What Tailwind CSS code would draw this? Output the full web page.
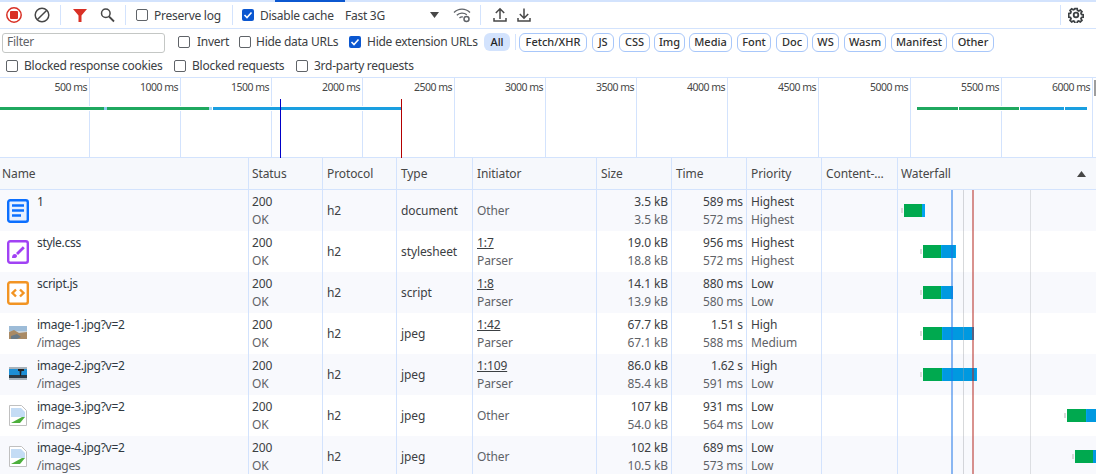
<!DOCTYPE html>
<html>
<head>
<meta charset="utf-8">
<script src="https://cdn.jsdelivr.net/npm/@tailwindcss/browser@4"></script>
</head>
<body class="bg-white">
<div class="relative w-[1096px] h-[474px] overflow-hidden bg-white text-[12px] leading-[18px] text-[#3c4043] font-['Noto_Sans',sans-serif] tracking-[-0.26px]">

  <!-- toolbar -->
  <div class="relative h-[29px] border-t-2 border-b border-[#d3e3fd] flex items-center">
    <div class="absolute left-[275px] top-[-2px] w-[70px] h-[2px] bg-[#0b57d0]"></div>
    <svg class="ml-[5px] w-[18px] h-[18px]" viewBox="0 0 18 18"><circle cx="9" cy="9" r="7.2" fill="none" stroke="#d93025" stroke-width="1.5"/><rect x="5" y="5" width="8" height="8" rx="1" fill="#d93025"/></svg>
    <svg class="ml-[10px] w-[18px] h-[18px]" viewBox="0 0 18 18"><circle cx="9" cy="9" r="6.8" fill="none" stroke="#474747" stroke-width="1.5"/><path d="M4.2 13.8 13.8 4.2" stroke="#474747" stroke-width="1.5"/></svg>
    <div class="ml-[9px] w-px h-[20px] bg-[#d3e3fd]"></div>
    <svg class="ml-[11px] w-[16px] h-[16px]" viewBox="0 0 16 16"><path d="M1 2h14L9.5 8.5V15h-3V8.5z" fill="#d93025"/></svg>
    <svg class="ml-[11px] w-[17px] h-[17px]" viewBox="0 0 17 17"><circle cx="6.8" cy="6.3" r="4.3" fill="none" stroke="#474747" stroke-width="1.5"/><path d="m10 9.5 5 5" stroke="#474747" stroke-width="1.8"/></svg>
    <div class="ml-[9px] w-px h-[20px] bg-[#d3e3fd]"></div>
    <span class="ml-[10px] w-[12px] h-[12px] rounded-[2px] border border-[#5f6368] bg-white"></span>
    <span class="ml-[6px] w-[72px] pt-px whitespace-nowrap">Preserve log</span>
    <div class="ml-[6px] w-px h-[20px] bg-[#d3e3fd]"></div>
    <span class="ml-[9px] w-[12px] h-[12px] rounded-[2px] bg-[#0b57d0] flex items-center justify-center"><svg class="w-[10px] h-[10px]" viewBox="0 0 10 10"><path d="M1.5 5 4 7.5 8.5 2.5" fill="none" stroke="#fff" stroke-width="1.6"/></svg></span>
    <span class="ml-[6px] w-[85px] pt-px whitespace-nowrap">Disable cache</span>
    <span class="w-[85px] pt-px whitespace-nowrap">Fast 3G</span>
    <svg class="w-[10px] h-[6px]" viewBox="0 0 10 6"><path d="M0 0h9L4.500 6z" fill="#474747"/></svg>
    <svg class="ml-[13px] w-[18px] h-[16px]" viewBox="0 0 18 16"><path d="M1 5.500C5.500 1 12.500 1 17 5.500M3.800 8.300C6.500 5.600 11 5.500 13.800 7.800M6.500 11c1-1 2.500-1.300 3.500-1" fill="none" stroke="#5f6368" stroke-width="1.300"/><circle cx="13.500" cy="12" r="2.500" fill="none" stroke="#5f6368" stroke-width="1.500"/></svg>
    <div class="ml-[9px] w-px h-[20px] bg-[#d3e3fd]"></div>
    <svg class="ml-[11px] w-[16px] h-[16px]" viewBox="0 0 16 16"><path d="M8 12V2M3.800 6 8 1.800 12.200 6M2 11v3h12v-3" fill="none" stroke="#474747" stroke-width="1.500"/></svg>
    <svg class="ml-[8px] w-[16px] h-[16px]" viewBox="0 0 16 16"><path d="M8 1.500V11M3.800 7 8 11.200 12.200 7M2 11v3h12v-3" fill="none" stroke="#474747" stroke-width="1.500"/></svg>
    <div class="ml-[528px] w-px h-[20px] bg-[#d3e3fd]"></div>
    <svg class="ml-[7px] w-[16px] h-[16px]" viewBox="0 0 16 16"><path d="M6.700 1h2.600l.4 2 1.400.6 1.700-1.100 1.800 1.800-1.100 1.700.6 1.400 2 .4v2.600l-2 .4-.6 1.400 1.100 1.700-1.800 1.800-1.700-1.100-1.400.6-.4 2H6.700l-.4-2-1.400-.6-1.700 1.100-1.800-1.800 1.100-1.700-.6-1.400-2-.4V6.400l2-.4.6-1.400-1.100-1.700 1.800-1.800 1.700 1.100 1.400-.6z" transform="translate(.8 .8) scale(.9)" fill="none" stroke="#3c4043" stroke-width="1.900"/><circle cx="8" cy="8" r="2.300" fill="none" stroke="#3c4043" stroke-width="1.800"/></svg>
  </div>

  <!-- filter row -->
  <div class="h-[24px] pt-[2px] flex items-center">
    <div class="ml-[2px] mt-px w-[163px] h-[20px] rounded-[3px] border border-[#c4c7c5] bg-white pl-[4px] text-[#5f6368] leading-[16px]">Filter</div>
    <span class="ml-[13px] w-[12px] h-[12px] rounded-[2px] border border-[#5f6368]"></span>
    <span class="ml-[7px] w-[42px] whitespace-nowrap">Invert</span>
    <span class="w-[12px] h-[12px] rounded-[2px] border border-[#5f6368]"></span>
    <span class="ml-[5px] w-[93px] whitespace-nowrap">Hide data URLs</span>
    <span class="w-[12px] h-[12px] rounded-[2px] bg-[#0b57d0] flex items-center justify-center"><svg class="w-[10px] h-[10px]" viewBox="0 0 10 10"><path d="M1.5 5 4 7.5 8.5 2.500" fill="none" stroke="#fff" stroke-width="1.600"/></svg></span>
    <span class="ml-[6px] w-[117px] whitespace-nowrap">Hide extension URLs</span>
    <span class="w-[26px] h-[18px] rounded-[6px] bg-[#d3e3fd] text-[11px] font-medium leading-[18px] text-center text-[#1f1f1f] tracking-normal">All</span>
    <div class="ml-[5px] w-px h-[16px] bg-[#d3e3fd]"></div>
    <div class="ml-[3px] flex text-[11px] font-medium leading-[16px] text-[#303030] tracking-normal">
      <span class="w-[68px] h-[19px] rounded-[6px] border border-[#a8c7fa] text-center">Fetch/XHR</span>
      <span class="ml-[5px] w-[22px] h-[19px] rounded-[6px] border border-[#a8c7fa] text-center">JS</span>
      <span class="ml-[5px] w-[31px] h-[19px] rounded-[6px] border border-[#a8c7fa] text-center">CSS</span>
      <span class="ml-[4px] w-[31px] h-[19px] rounded-[6px] border border-[#a8c7fa] text-center">Img</span>
      <span class="ml-[4px] w-[43px] h-[19px] rounded-[6px] border border-[#a8c7fa] text-center">Media</span>
      <span class="ml-[5px] w-[34px] h-[19px] rounded-[6px] border border-[#a8c7fa] text-center">Font</span>
      <span class="ml-[5px] w-[32px] h-[19px] rounded-[6px] border border-[#a8c7fa] text-center">Doc</span>
      <span class="ml-[4px] w-[27px] h-[19px] rounded-[6px] border border-[#a8c7fa] text-center">WS</span>
      <span class="ml-[5px] w-[42px] h-[19px] rounded-[6px] border border-[#a8c7fa] text-center">Wasm</span>
      <span class="ml-[5px] w-[56px] h-[19px] rounded-[6px] border border-[#a8c7fa] text-center">Manifest</span>
      <span class="ml-[5px] w-[42px] h-[19px] rounded-[6px] border border-[#a8c7fa] text-center">Other</span>
    </div>
  </div>

  <!-- third row -->
  <div class="h-[25px] pt-[2px] flex items-center border-b border-[#d3e3fd]">
    <span class="ml-[6px] w-[12px] h-[12px] rounded-[2px] border border-[#5f6368]"></span>
    <span class="ml-[6px] w-[150px] whitespace-nowrap">Blocked response cookies</span>
    <span class="w-[12px] h-[12px] rounded-[2px] border border-[#5f6368]"></span>
    <span class="ml-[6px] w-[104px] whitespace-nowrap">Blocked requests</span>
    <span class="w-[12px] h-[12px] rounded-[2px] border border-[#5f6368]"></span>
    <span class="ml-[6px] whitespace-nowrap">3rd-party requests</span>
  </div>

  <!-- overview -->
  <div class="relative h-[80px] border-b border-[#d3e3fd] text-[10.500px] leading-[16px] text-[#474747] tracking-[-0.5px]">
    <div class="flex h-full">
      <div class="w-[90px] shrink-0 border-r border-[#d3e3fd] text-right pr-[2px] pt-[1px]">500 ms</div>
      <div class="w-[91px] shrink-0 border-r border-[#d3e3fd] text-right pr-[2px] pt-[1px]">1000 ms</div>
      <div class="w-[91px] shrink-0 border-r border-[#d3e3fd] text-right pr-[2px] pt-[1px]">1500 ms</div>
      <div class="w-[91px] shrink-0 border-r border-[#d3e3fd] text-right pr-[2px] pt-[1px]">2000 ms</div>
      <div class="w-[92px] shrink-0 border-r border-[#d3e3fd] text-right pr-[2px] pt-[1px]">2500 ms</div>
      <div class="w-[91px] shrink-0 border-r border-[#d3e3fd] text-right pr-[2px] pt-[1px]">3000 ms</div>
      <div class="w-[91px] shrink-0 border-r border-[#d3e3fd] text-right pr-[2px] pt-[1px]">3500 ms</div>
      <div class="w-[91px] shrink-0 border-r border-[#d3e3fd] text-right pr-[2px] pt-[1px]">4000 ms</div>
      <div class="w-[91px] shrink-0 border-r border-[#d3e3fd] text-right pr-[2px] pt-[1px]">4500 ms</div>
      <div class="w-[92px] shrink-0 border-r border-[#d3e3fd] text-right pr-[2px] pt-[1px]">5000 ms</div>
      <div class="w-[91px] shrink-0 border-r border-[#d3e3fd] text-right pr-[2px] pt-[1px]">5500 ms</div>
      <div class="w-[91px] shrink-0 border-r border-[#d3e3fd] text-right pr-[2px] pt-[1px]">6000 ms</div>
    </div>
    <!-- activity bars -->
    <div class="absolute left-0 top-[28px] w-[401px] h-[5px] bg-white"></div>
    <div class="absolute left-0 top-[29px] w-[104px] h-[3px] bg-[#1fa85f]"></div>
    <div class="absolute left-[104px] top-[29px] w-[3px] h-[3px] bg-[#8ccbf0]"></div>
    <div class="absolute left-[107px] top-[29px] w-[102px] h-[3px] bg-[#1fa85f]"></div>
    <div class="absolute left-[209px] top-[29px] w-[3px] h-[3px] bg-[#a8d8f5]"></div>
    <div class="absolute left-[213px] top-[29px] w-[188px] h-[3px] bg-[#1a9fe0]"></div>
    <div class="absolute left-[917px] top-[28px] w-[171px] h-[5px] bg-white"></div>
    <div class="absolute left-[917px] top-[29px] w-[41px] h-[3px] bg-[#1fa85f]"></div>
    <div class="absolute left-[959px] top-[29px] w-[60px] h-[3px] bg-[#1fa85f]"></div>
    <div class="absolute left-[1020px] top-[29px] w-[44px] h-[3px] bg-[#1a9fe0]"></div>
    <div class="absolute left-[1065px] top-[29px] w-[22px] h-[3px] bg-[#1a9fe0]"></div>
    <!-- markers -->
    <div class="absolute left-[280px] top-[21px] w-px h-[59px] bg-[#0000c8]"></div>
    <div class="absolute left-[401px] top-[21px] w-px h-[59px] bg-[#b30000]"></div>
    <div class="absolute left-[1094px] top-[2px] w-[2px] h-[16px] bg-[#9e9e9e]"></div>
  </div>

  <!-- header -->
  <div class="grid grid-cols-[248px_74px_74px_76px_124px_75px_75px_75px_76px_199px] h-[32px] bg-[#f6f8fc] border-b border-[#d3e3fd] leading-[31px] text-[#474747] tracking-[-0.1px]">
    <div class="pl-[2px]">Name</div>
    <div class="border-l border-[#d3e3fd] pl-[3px]">Status</div>
    <div class="border-l border-[#d3e3fd] pl-[4px]">Protocol</div>
    <div class="border-l border-[#d3e3fd] pl-[4px]">Type</div>
    <div class="border-l border-[#d3e3fd] pl-[4px]">Initiator</div>
    <div class="border-l border-[#d3e3fd] pl-[4px]">Size</div>
    <div class="border-l border-[#d3e3fd] pl-[4px]">Time</div>
    <div class="border-l border-[#d3e3fd] pl-[4px]">Priority</div>
    <div class="border-l border-[#d3e3fd] pl-[4px] whitespace-nowrap overflow-hidden">Content-…</div>
    <div class="border-l border-[#d3e3fd] pl-[3px] flex justify-between items-center pr-[10px]"><span>Waterfall</span><svg class="w-[9px] h-[6px]" viewBox="0 0 9 6"><path d="M4.500 0 9 6H0z" fill="#474747"/></svg></div>
  </div>

  <!-- rows -->
  <div class="tracking-[-0.1px]">
    <!-- row 1 -->
    <div class="grid grid-cols-[248px_74px_74px_76px_124px_75px_75px_75px_76px_199px] h-[41px] bg-[#f8f9fd]">
      <div class="flex items-center"><svg class="ml-[7px] w-[22px] h-[24px]" viewBox="0 0 22 24"><rect x="1.200" y="1.200" width="19.600" height="21.600" rx="2" fill="#e8f0fe" stroke="#0b6fff" stroke-width="2.400"/><path d="M5 6.500h12M5 11.500h12M5 16.500h9" stroke="#0b6fff" stroke-width="2.400"/></svg><div class="ml-[8px] self-start pt-[3px] text-[#303942]">1</div></div>
      <div class="border-l border-[#d3e3fd] pl-[3px] flex flex-col justify-center"><span>200</span><span class="text-[#5f6368]">OK</span></div>
      <div class="border-l border-[#d3e3fd] pl-[4px] flex items-center">h2</div>
      <div class="border-l border-[#d3e3fd] pl-[4px] flex items-center">document</div>
      <div class="border-l border-[#d3e3fd] pl-[4px] flex items-center text-[#5f6368]">Other</div>
      <div class="border-l border-[#d3e3fd] pr-[3px] flex flex-col justify-center text-right"><span>3.5 kB</span><span class="text-[#5f6368]">3.5 kB</span></div>
      <div class="border-l border-[#d3e3fd] pr-[3px] flex flex-col justify-center text-right"><span>589 ms</span><span class="text-[#5f6368]">572 ms</span></div>
      <div class="border-l border-[#d3e3fd] pl-[4px] flex flex-col justify-center"><span>Highest</span><span class="text-[#5f6368]">Highest</span></div>
      <div class="border-l border-[#d3e3fd]"></div>
      <div class="border-l border-[#d3e3fd] flex items-center overflow-hidden"><span class="ml-[3px] w-[2px] h-[5px] bg-[#d9d9d9]"></span><span class="ml-px w-[18px] h-[13px] bg-[#00a94f]"></span><span class="w-[3px] h-[13px] bg-[#00a4f0]"></span></div>
    </div>
    <!-- row 2 -->
    <div class="grid grid-cols-[248px_74px_74px_76px_124px_75px_75px_75px_76px_199px] h-[41px]">
      <div class="flex items-center"><svg class="ml-[7px] w-[22px] h-[24px]" viewBox="0 0 22 24"><rect x="1.200" y="1.200" width="19.600" height="21.600" rx="2" fill="#fff" stroke="#a142f4" stroke-width="2.400"/><path d="M9 13 15.800 6.300l2 2L11 15z" fill="#a142f4"/><path d="M5 18c0-2.500 1-4 2.800-4 1.300 0 2.200.9 2.200 2 0 1.500-1.300 2-2.600 2z" fill="#a142f4"/></svg><div class="ml-[8px] self-start pt-[3px] text-[#303942] tracking-[-0.3px]">style.css</div></div>
      <div class="border-l border-[#d3e3fd] pl-[3px] flex flex-col justify-center"><span>200</span><span class="text-[#5f6368]">OK</span></div>
      <div class="border-l border-[#d3e3fd] pl-[4px] flex items-center">h2</div>
      <div class="border-l border-[#d3e3fd] pl-[4px] flex items-center">stylesheet</div>
      <div class="border-l border-[#d3e3fd] pl-[4px] flex flex-col justify-center"><span class="underline">1:7</span><span class="text-[#5f6368]">Parser</span></div>
      <div class="border-l border-[#d3e3fd] pr-[3px] flex flex-col justify-center text-right"><span>19.0 kB</span><span class="text-[#5f6368]">18.8 kB</span></div>
      <div class="border-l border-[#d3e3fd] pr-[3px] flex flex-col justify-center text-right"><span>956 ms</span><span class="text-[#5f6368]">572 ms</span></div>
      <div class="border-l border-[#d3e3fd] pl-[4px] flex flex-col justify-center"><span>Highest</span><span class="text-[#5f6368]">Highest</span></div>
      <div class="border-l border-[#d3e3fd]"></div>
      <div class="border-l border-[#d3e3fd] flex items-center overflow-hidden"><span class="ml-[22px] w-[2px] h-[5px] bg-[#d9d9d9]"></span><span class="ml-px w-[18px] h-[13px] bg-[#00a94f]"></span><span class="w-[15px] h-[13px] bg-[#0099e0] border-x border-[#00a4f0]"></span></div>
    </div>
    <!-- row 3 -->
    <div class="grid grid-cols-[248px_74px_74px_76px_124px_75px_75px_75px_76px_199px] h-[41px] bg-[#f8f9fd]">
      <div class="flex items-center"><svg class="ml-[7px] w-[22px] h-[24px]" viewBox="0 0 22 24"><rect x="1.200" y="1.200" width="19.600" height="21.600" rx="2" fill="#fff" stroke="#f29423" stroke-width="2.400"/><path d="M9 8.500 5.500 12 9 15.500M13 8.500l3.500 3.500-3.500 3.500" fill="none" stroke="#f29423" stroke-width="2.400"/></svg><div class="ml-[8px] self-start pt-[3px] text-[#303942] tracking-[-0.3px]">script.js</div></div>
      <div class="border-l border-[#d3e3fd] pl-[3px] flex flex-col justify-center"><span>200</span><span class="text-[#5f6368]">OK</span></div>
      <div class="border-l border-[#d3e3fd] pl-[4px] flex items-center">h2</div>
      <div class="border-l border-[#d3e3fd] pl-[4px] flex items-center">script</div>
      <div class="border-l border-[#d3e3fd] pl-[4px] flex flex-col justify-center"><span class="underline">1:8</span><span class="text-[#5f6368]">Parser</span></div>
      <div class="border-l border-[#d3e3fd] pr-[3px] flex flex-col justify-center text-right"><span>14.1 kB</span><span class="text-[#5f6368]">13.9 kB</span></div>
      <div class="border-l border-[#d3e3fd] pr-[3px] flex flex-col justify-center text-right"><span>880 ms</span><span class="text-[#5f6368]">580 ms</span></div>
      <div class="border-l border-[#d3e3fd] pl-[4px] flex flex-col justify-center"><span>Low</span><span class="text-[#5f6368]">Low</span></div>
      <div class="border-l border-[#d3e3fd]"></div>
      <div class="border-l border-[#d3e3fd] flex items-center overflow-hidden"><span class="ml-[22px] w-[2px] h-[5px] bg-[#d9d9d9]"></span><span class="ml-px w-[18px] h-[13px] bg-[#00a94f]"></span><span class="w-[12px] h-[13px] bg-[#0099e0] border-l border-[#00a4f0]"></span></div>
    </div>
    <!-- row 4 -->
    <div class="grid grid-cols-[248px_74px_74px_76px_124px_75px_75px_75px_76px_199px] h-[41px]">
      <div class="flex items-center"><svg class="ml-[9px] -mt-[2px] w-[18px] h-[13px]" viewBox="0 0 18 13"><rect width="18" height="13" fill="#c9d3da"/><rect width="18" height="5" fill="#9dbcd8"/><path d="M0 13V6l5-2 5 3 8-1v7z" fill="#a98a64"/><path d="M2 10l6-2 4 3-4 2H2z" fill="#6a7a86"/></svg><div class="ml-[10px] self-stretch flex flex-col justify-center text-[#303942] tracking-[-0.3px]"><span>image-1.jpg?v=2</span><span class="text-[#5f6368]">/images</span></div></div>
      <div class="border-l border-[#d3e3fd] pl-[3px] flex flex-col justify-center"><span>200</span><span class="text-[#5f6368]">OK</span></div>
      <div class="border-l border-[#d3e3fd] pl-[4px] flex items-center">h2</div>
      <div class="border-l border-[#d3e3fd] pl-[4px] flex items-center">jpeg</div>
      <div class="border-l border-[#d3e3fd] pl-[4px] flex flex-col justify-center"><span class="underline">1:42</span><span class="text-[#5f6368]">Parser</span></div>
      <div class="border-l border-[#d3e3fd] pr-[3px] flex flex-col justify-center text-right"><span>67.7 kB</span><span class="text-[#5f6368]">67.1 kB</span></div>
      <div class="border-l border-[#d3e3fd] pr-[3px] flex flex-col justify-center text-right"><span>1.51 s</span><span class="text-[#5f6368]">588 ms</span></div>
      <div class="border-l border-[#d3e3fd] pl-[4px] flex flex-col justify-center"><span>High</span><span class="text-[#5f6368]">Medium</span></div>
      <div class="border-l border-[#d3e3fd]"></div>
      <div class="border-l border-[#d3e3fd] flex items-center overflow-hidden"><span class="ml-[22px] w-[2px] h-[5px] bg-[#d9d9d9]"></span><span class="ml-px w-[19px] h-[13px] bg-[#00a94f]"></span><span class="w-[32px] h-[13px] bg-[#0099e0] border-l border-[#00a4f0]"></span></div>
    </div>
    <!-- row 5 -->
    <div class="grid grid-cols-[248px_74px_74px_76px_124px_75px_75px_75px_76px_199px] h-[41px] bg-[#f8f9fd]">
      <div class="flex items-center"><svg class="ml-[9px] -mt-[2px] w-[18px] h-[13px]" viewBox="0 0 18 13"><rect width="18" height="13" fill="#a8b2ba"/><rect y="2" width="18" height="6" fill="#1d8fd6"/><path d="M0 8h18v3H0z" fill="#2b3a46"/><path d="M9 2h6v2h-2.500l-.5 5h-1l-.5-5H9z" fill="#222"/></svg><div class="ml-[10px] self-stretch flex flex-col justify-center text-[#303942] tracking-[-0.3px]"><span>image-2.jpg?v=2</span><span class="text-[#5f6368]">/images</span></div></div>
      <div class="border-l border-[#d3e3fd] pl-[3px] flex flex-col justify-center"><span>200</span><span class="text-[#5f6368]">OK</span></div>
      <div class="border-l border-[#d3e3fd] pl-[4px] flex items-center">h2</div>
      <div class="border-l border-[#d3e3fd] pl-[4px] flex items-center">jpeg</div>
      <div class="border-l border-[#d3e3fd] pl-[4px] flex flex-col justify-center"><span class="underline">1:109</span><span class="text-[#5f6368]">Parser</span></div>
      <div class="border-l border-[#d3e3fd] pr-[3px] flex flex-col justify-center text-right"><span>86.0 kB</span><span class="text-[#5f6368]">85.4 kB</span></div>
      <div class="border-l border-[#d3e3fd] pr-[3px] flex flex-col justify-center text-right"><span>1.62 s</span><span class="text-[#5f6368]">591 ms</span></div>
      <div class="border-l border-[#d3e3fd] pl-[4px] flex flex-col justify-center"><span>High</span><span class="text-[#5f6368]">Low</span></div>
      <div class="border-l border-[#d3e3fd]"></div>
      <div class="border-l border-[#d3e3fd] flex items-center overflow-hidden"><span class="ml-[22px] w-[2px] h-[5px] bg-[#d9d9d9]"></span><span class="ml-px w-[19px] h-[13px] bg-[#00a94f]"></span><span class="w-[35px] h-[13px] bg-[#0099e0] border-x border-[#00a4f0]"></span></div>
    </div>
    <!-- row 6 -->
    <div class="grid grid-cols-[248px_74px_74px_76px_124px_75px_75px_75px_76px_199px] h-[41px]">
      <div class="flex items-center"><svg class="ml-[9px] w-[18px] h-[21px]" viewBox="0 0 18 21"><path d="M.5.5h12l5 5v15H.5z" fill="#fff" stroke="#c0c0c0"/><path d="M2 3h10l4 4v5H2z" fill="#c4dcf5"/><path d="M2 18l11-6h3l-5 6z" fill="#4caf3c"/></svg><div class="ml-[10px] self-stretch flex flex-col justify-center text-[#303942] tracking-[-0.3px]"><span>image-3.jpg?v=2</span><span class="text-[#5f6368]">/images</span></div></div>
      <div class="border-l border-[#d3e3fd] pl-[3px] flex flex-col justify-center"><span>200</span><span class="text-[#5f6368]">OK</span></div>
      <div class="border-l border-[#d3e3fd] pl-[4px] flex items-center">h2</div>
      <div class="border-l border-[#d3e3fd] pl-[4px] flex items-center">jpeg</div>
      <div class="border-l border-[#d3e3fd] pl-[4px] flex items-center text-[#5f6368]">Other</div>
      <div class="border-l border-[#d3e3fd] pr-[3px] flex flex-col justify-center text-right"><span>107 kB</span><span class="text-[#5f6368]">54.0 kB</span></div>
      <div class="border-l border-[#d3e3fd] pr-[3px] flex flex-col justify-center text-right"><span>931 ms</span><span class="text-[#5f6368]">564 ms</span></div>
      <div class="border-l border-[#d3e3fd] pl-[4px] flex flex-col justify-center"><span>Low</span><span class="text-[#5f6368]">Low</span></div>
      <div class="border-l border-[#d3e3fd]"></div>
      <div class="border-l border-[#d3e3fd] flex items-center overflow-hidden"><span class="ml-[166px] w-[2px] h-[5px] bg-[#d9d9d9] shrink-0"></span><span class="ml-px w-[19px] h-[13px] bg-[#00a94f] shrink-0"></span><span class="w-[12px] h-[13px] bg-[#0099e0] shrink-0 border-l border-[#00a4f0]"></span></div>
    </div>
    <!-- row 7 -->
    <div class="grid grid-cols-[248px_74px_74px_76px_124px_75px_75px_75px_76px_199px] h-[41px] bg-[#f8f9fd]">
      <div class="flex items-center"><svg class="ml-[9px] w-[18px] h-[21px]" viewBox="0 0 18 21"><path d="M.5.5h12l5 5v15H.5z" fill="#fff" stroke="#c0c0c0"/><path d="M2 3h10l4 4v5H2z" fill="#c4dcf5"/><path d="M2 18l11-6h3l-5 6z" fill="#4caf3c"/></svg><div class="ml-[10px] self-stretch flex flex-col justify-center text-[#303942] tracking-[-0.3px]"><span>image-4.jpg?v=2</span><span class="text-[#5f6368]">/images</span></div></div>
      <div class="border-l border-[#d3e3fd] pl-[3px] flex flex-col justify-center"><span>200</span><span class="text-[#5f6368]">OK</span></div>
      <div class="border-l border-[#d3e3fd] pl-[4px] flex items-center">h2</div>
      <div class="border-l border-[#d3e3fd] pl-[4px] flex items-center">jpeg</div>
      <div class="border-l border-[#d3e3fd] pl-[4px] flex items-center text-[#5f6368]">Other</div>
      <div class="border-l border-[#d3e3fd] pr-[3px] flex flex-col justify-center text-right"><span>102 kB</span><span class="text-[#5f6368]">10.5 kB</span></div>
      <div class="border-l border-[#d3e3fd] pr-[3px] flex flex-col justify-center text-right"><span>689 ms</span><span class="text-[#5f6368]">573 ms</span></div>
      <div class="border-l border-[#d3e3fd] pl-[4px] flex flex-col justify-center"><span>Low</span><span class="text-[#5f6368]">Low</span></div>
      <div class="border-l border-[#d3e3fd]"></div>
      <div class="border-l border-[#d3e3fd] flex items-center overflow-hidden"><span class="ml-[174px] w-[2px] h-[5px] bg-[#d9d9d9] shrink-0"></span><span class="ml-px w-[18px] h-[13px] bg-[#00a94f] shrink-0"></span><span class="w-[3px] h-[13px] bg-[#0099e0] shrink-0"></span></div>
    </div>
  </div>

  <!-- waterfall markers lying over the rows -->
  <div class="absolute left-[951px] top-[190px] w-[2px] h-[284px] bg-[#1a73e8]/50"></div>
  <div class="absolute left-[963px] top-[190px] w-px h-[284px] bg-[#9aa0a6]/40"></div>
  <div class="absolute left-[972px] top-[190px] w-[2px] h-[284px] bg-[#b3261e]/50"></div>
  <div class="absolute left-[1030px] top-[190px] w-px h-[284px] bg-[#9aa0a6]/30"></div>
</div>
</body>
</html>
